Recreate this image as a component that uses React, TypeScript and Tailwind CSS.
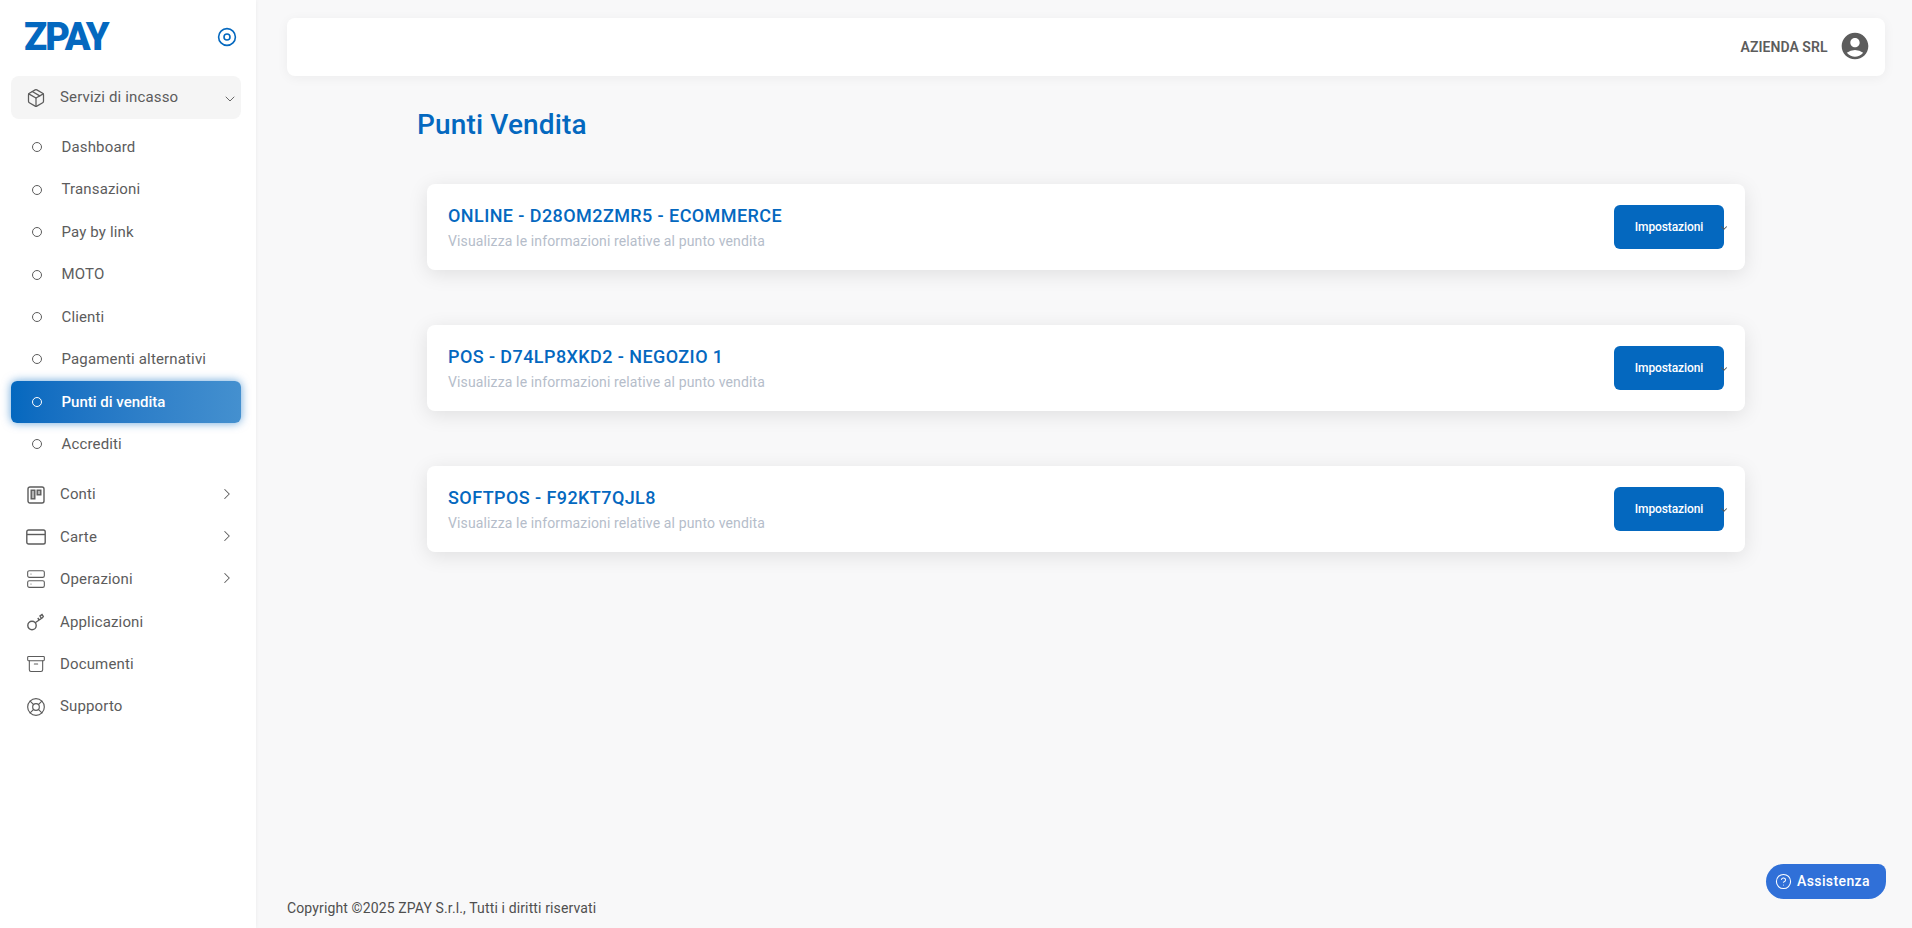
import React from "react";
import { Archive, ChevronDown, ChevronRight, CircleHelp, LifeBuoy, Package, Server } from "lucide-react";
import { MdAccountCircle } from "react-icons/md";

const subItems = ["Dashboard", "Transazioni", "Pay by link", "MOTO", "Clienti", "Pagamenti alternativi", "Punti di vendita", "Accrediti"];

const stores = ["ONLINE - D28OM2ZMR5 - ECOMMERCE", "POS - D74LP8XKD2 - NEGOZIO 1", "SOFTPOS - F92KT7QJL8"];

const BoardIcon = () => (
  <svg width="18" height="18" viewBox="0 0 18 18" fill="none" stroke="currentColor" strokeWidth="1.4">
    <rect x="1" y="1" width="16" height="16" rx="2" />
    <rect x="4.2" y="4.2" width="3.6" height="8.6" fill="currentColor" fillOpacity="0.45" />
    <rect x="10.2" y="4.2" width="3.6" height="4.6" fill="currentColor" fillOpacity="0.45" />
  </svg>
);

const CardIcon = () => (
  <svg width="20" height="16" viewBox="0 0 20 16" fill="none" stroke="currentColor" strokeWidth="1.4">
    <rect x="0.8" y="1" width="18.4" height="14" rx="1.8" />
    <path d="M1 5.5h18" />
  </svg>
);

const KeyIcon = () => (
  <svg width="20" height="18" viewBox="0 0 20 18" fill="none" stroke="currentColor" strokeWidth="1.4">
    <circle cx="6" cy="12.5" r="4.2" />
    <path d="M9.2 9.8 17.5 4M13.2 7 11.8 5M15.4 5.4l-1.4-2.4 2-1.4 1.6 2.4" />
  </svg>
);

const TargetIcon = () => (
  <svg width="20" height="20" viewBox="0 0 20 20" fill="none" stroke="currentColor" strokeWidth="1.6">
    <circle cx="10" cy="10" r="8.4" />
    <circle cx="10" cy="10" r="3" />
  </svg>
);

const NavRow = ({ icon, label, chevron }: { icon: React.ReactNode; label: string; chevron?: boolean }) => (
  <div className="flex h-[42.4px] items-center pl-[15px] pr-[5px] text-[#5c5c5c]">
    <div className="flex w-[20px] shrink-0 items-center justify-center">{icon}</div>
    <span className="ml-[14px] flex-1 text-[15px] tracking-[0.15px]">{label}</span>
    {chevron && <ChevronRight size={18} strokeWidth={1.4} className="-mt-[2px]" />}
  </div>
);

export default function App() {
  return (
    <div className="relative flex h-[928px] overflow-hidden bg-[#f8f8f9] font-['Roboto',sans-serif]">
      <aside className="w-[256px] shrink-0 bg-white pl-[11px] pr-[15px] shadow-[0_0_4px_rgba(0,0,0,0.06)]">
        <div className="flex h-[76px] items-center justify-between pb-[2px] pl-[13px] pr-[4px]">
          <span className="text-[38px] font-black leading-none tracking-[-2px] text-[#0468bf]">ZPAY</span>
          <span className="text-[#0468bf]">
            <TargetIcon />
          </span>
        </div>

        <div className="flex h-[43px] items-center rounded-lg bg-[#f5f5f5] pl-[15px] pr-[3px] text-[#5c5c5c]">
          <div className="flex w-[20px] shrink-0 items-center justify-center">
            <Package size={22} strokeWidth={1.5} />
          </div>
          <span className="ml-[14px] flex-1 text-[15px] tracking-[0.15px]">Servizi di incasso</span>
          <ChevronDown size={16} strokeWidth={1.4} className="mt-[2px]" />
        </div>

        <div className="mt-[7px] mb-[8px]">
          {subItems.map((item) => {
            const active = item === "Punti di vendita";
            return (
              <div
                key={item}
                className={
                  active
                    ? "flex h-[42.45px] items-center rounded-md bg-gradient-to-r from-[#0468bf] to-[#4490cf] pl-[20.5px] font-medium text-white shadow-[0_0_10px_rgba(4,104,191,0.6)]"
                    : "flex h-[42.45px] items-center pl-[20.5px] text-[#5c5c5c]"
                }
              >
                <span className={active ? "h-[10px] w-[10px] rounded-full border border-white" : "h-[10px] w-[10px] rounded-full border border-[#5c5c5c]"} />
                <span className={active ? "ml-[20px] text-[15px]" : "ml-[20px] text-[15px] tracking-[0.15px]"}>{item}</span>
              </div>
            );
          })}
        </div>

        <NavRow icon={<BoardIcon />} label="Conti" chevron />
        <NavRow icon={<CardIcon />} label="Carte" chevron />
        <NavRow icon={<Server size={22} strokeWidth={1.3} />} label="Operazioni" chevron />
        <NavRow icon={<KeyIcon />} label="Applicazioni" />
        <NavRow icon={<Archive size={24} strokeWidth={1.3} />} label="Documenti" />
        <NavRow icon={<LifeBuoy size={22} strokeWidth={1.4} />} label="Supporto" />
      </aside>

      <main className="flex min-w-0 flex-1 flex-col pl-[31px] pr-[27px]">
        <header className="mt-[18px] flex h-[58px] items-center justify-end rounded-lg bg-white pr-[14px] shadow-[0_2px_12px_rgba(0,0,0,0.05)]">
          <span className="text-[14px] font-semibold tracking-[0.05px] text-[#5c5c5c]">AZIENDA SRL</span>
          <MdAccountCircle size={32} className="ml-[11.5px] -mt-[2px] text-[#5c5c5c]" />
        </header>

        <h1 className="mt-[31px] pl-[130px] text-[28px] font-medium leading-[36px] tracking-[0.15px] text-[#0468bf]">Punti Vendita</h1>

        <div className="ml-[140px] mt-[41px] flex w-[1318px] flex-col gap-[55px]">
          {stores.map((name) => (
            <section key={name} className="flex h-[86px] items-center justify-between rounded-lg bg-white pl-[21px] pr-[21px] shadow-[0_4px_20px_rgba(0,0,0,0.1)]">
              <div>
                <h2 className="text-[18px] font-medium leading-[24px] tracking-[0.42px] text-[#0468bf]">{name}</h2>
                <p className="mt-[3px] text-[14px] leading-[20px] tracking-[0.13px] text-[#b5bdca]">Visualizza le informazioni relative al punto vendita</p>
              </div>
              <div className="relative">
                <button className="h-[44px] w-[110px] rounded-md bg-[#0468bf] text-[12px] font-medium tracking-[-0.1px] text-white">Impostazioni</button>
                <ChevronDown size={10} strokeWidth={2.5} className="absolute -right-[5px] top-[18px] text-[#555555]" />
              </div>
            </section>
          ))}
        </div>

        <footer className="mt-auto pb-[9px] text-[14px] tracking-[0.13px] text-[#4f4f4f]">Copyright ©2025 ZPAY S.r.l., Tutti i diritti riservati</footer>
      </main>

      <button className="absolute bottom-[29px] right-[26px] flex h-[35px] w-[120px] items-center rounded-tl-[18px] rounded-bl-[18px] rounded-tr-[8px] rounded-br-[18px] bg-[#3070d8] pl-[9px] text-[14px] font-medium tracking-[0.4px] text-white">
        <CircleHelp size={17} strokeWidth={1.5} />
        <span className="ml-[5px]">Assistenza</span>
      </button>
    </div>
  );
}
